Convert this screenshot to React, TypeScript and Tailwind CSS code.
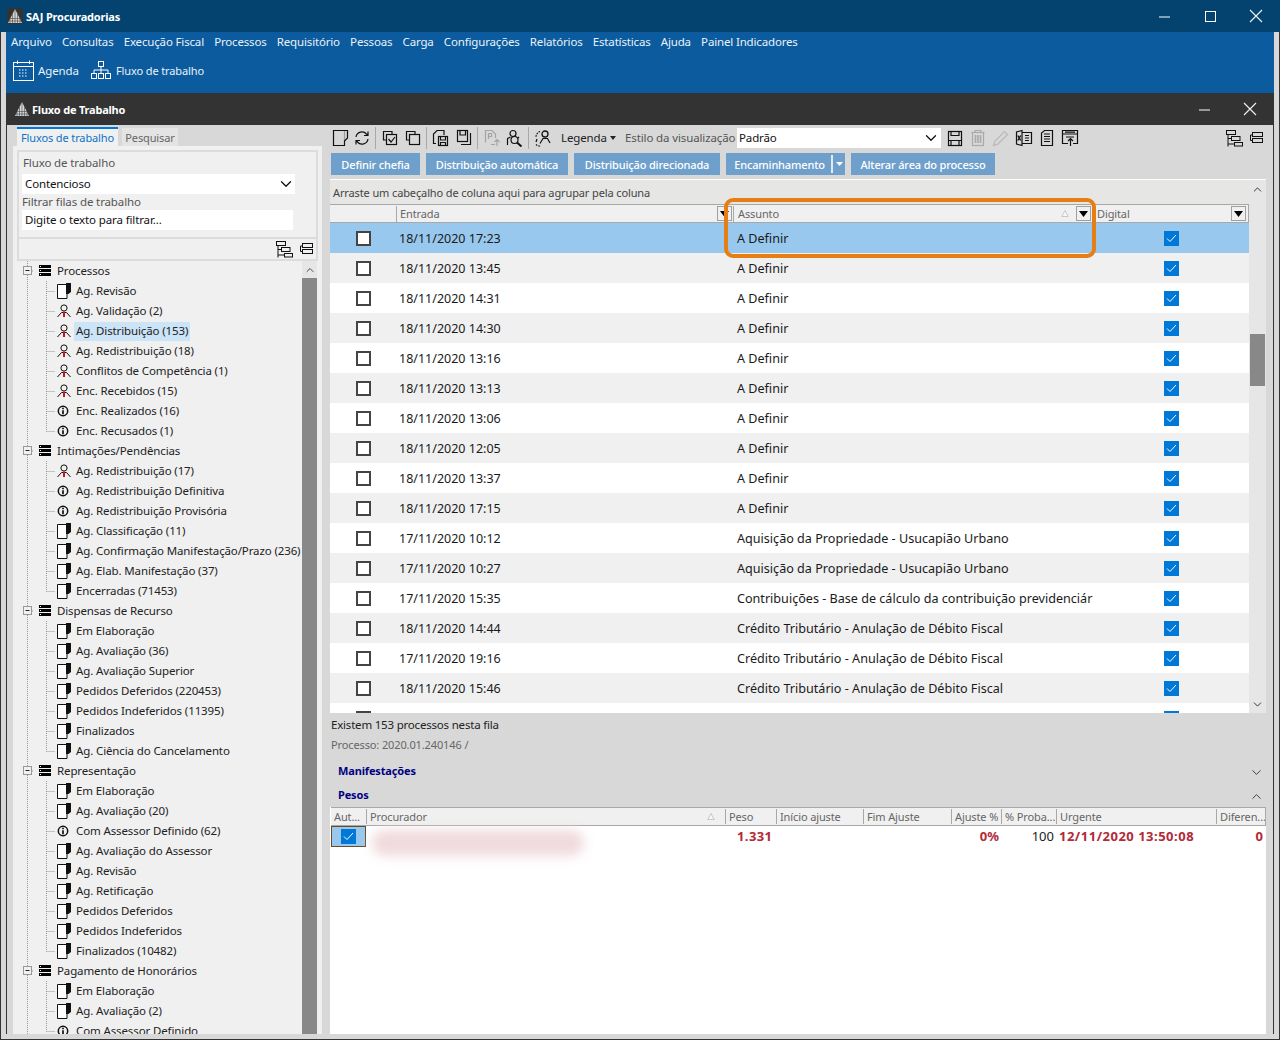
import React from "react";
import { ChevronDown, ChevronUp } from "lucide-react";

type S = { children: React.ReactNode; w?: number; h?: number; c?: string };
const Ic = ({ children, w = 18, h = 18, c = "#111" }: S) => (
  <svg width={w} height={h} viewBox={`0 0 ${w} ${h}`} fill="none" stroke={c} strokeWidth="1.2">{children}</svg>
);

const Logo = () => (
  <svg width="16" height="16" viewBox="0 0 16 16">
    <path d="M8 1 L15 15 H1 Z" fill="#d6d6d6" />
    <path d="M8 1V15M5.500 6V15M10.500 6V15M3 11V15M13 11V15M3 10.500H13M1.500 13H14.500" stroke="#444" strokeWidth=".6" fill="none" />
  </svg>
);

const WinX = () => (
  <svg width="14" height="14" viewBox="0 0 14 14" stroke="#f0f4f8" strokeWidth="1.1"><path d="M1 1L13 13M13 1L1 13" /></svg>
);
const WinMin = () => (
  <svg width="11" height="11" viewBox="0 0 11 11" stroke="#fff" strokeWidth="1"><path d="M0 6H11" /></svg>
);
const WinMax = () => (
  <svg width="11" height="11" viewBox="0 0 11 11" fill="none" stroke="#fff" strokeWidth="1"><rect x=".5" y=".5" width="10" height="10" /></svg>
);

const Calendar = () => (
  <svg width="21" height="21" viewBox="0 0 21 21" fill="none" stroke="#fff" strokeWidth="1">
    <rect x=".5" y="2.500" width="20" height="18" />
    <path d="M1 6.500H20M4.500 .5V4M16.500 .5V4" />
    <path d="M6 10H15M6 13H15M6 16H15" strokeDasharray="1.500 1.500" />
  </svg>
);
const Flow = () => (
  <svg width="21" height="19" viewBox="0 0 21 19" fill="none" stroke="#fff" strokeWidth="1">
    <rect x="7.500" y=".5" width="5" height="5" />
    <rect x=".5" y="12.500" width="5" height="5" />
    <rect x="7.500" y="12.500" width="5" height="5" />
    <rect x="14.500" y="12.500" width="5" height="5" />
    <path d="M10 6V12M3 12V9H17V12" />
  </svg>
);

const DocFold = () => (
  <Ic><path d="M2.500 1.500H16.500V9L13.500 12V16.500H2.500Z" /><path d="M13.500 12V1.500" opacity=".3" /></Ic>
);
const Refresh = () => (
  <Ic>
    <path d="M3 8a6 6 0 0 1 10.500-3L15 6.500M15 2.500V6.500H11" />
    <path d="M15 10a6 6 0 0 1-10.500 3L3 11.500M3 15.500V11.500H7" />
  </Ic>
);
const CopyCheck = () => (
  <Ic><path d="M11 5V2.500H2.500V11H5" /><rect x="5.500" y="5.500" width="10" height="10" /><path d="M7.500 10L10 13L14 8" /></Ic>
);
const Copy = () => (
  <Ic><path d="M11 5V2.500H2.500V11H5" /><rect x="5.500" y="5.500" width="10" height="10" /></Ic>
);
const DocSave = () => (
  <Ic><path d="M4 14.500H1.500V5L5 1.500H12V6" /><rect x="6.500" y="7.500" width="9" height="9" /><path d="M8.500 7.500V11H13.500V7.500M8.500 16V13.500H13.500V16" /></Ic>
);
const SaveB = () => (
  <Ic><rect x="2.500" y="1.500" width="10" height="11" /><path d="M5 1.500V6H10.500V1.500M15.500 4V15.500H6" /></Ic>
);
const PDoc = () => (
  <Ic c="#a4a4a4"><path d="M2.500 13.500V1.500H9L12.500 5V9" /><path d="M5.500 10V4.500H8.500V7.500H5.500" /><path d="M14 17V11M11.500 13L14 10.500L16.500 13M8 15.500H12" /></Ic>
);
const PersonSearch = () => (
  <Ic><circle cx="7" cy="4.500" r="3" /><path d="M1.500 16V9.500L4.500 8M12 8L13 9" /><circle cx="8.500" cy="11" r="3.500" /><path d="M11 13.500L15.500 17.500" strokeWidth="2" /></Ic>
);
const People = () => (
  <Ic><circle cx="11" cy="5" r="3" strokeWidth="1.300" /><path d="M6 14.500L9 9.500H13.500L16 14" /><path d="M6 2.500a6 6 0 0 0-4 6M2 15.500a6 6 0 0 0 5 1.500" strokeDasharray="1.600 1" /><path d="M3 10L2 13" /></Ic>
);
const Floppy = () => (
  <Ic><rect x="2.500" y="2.500" width="13" height="14" /><path d="M5 2.500V6.500H13V2.500M2.500 11.500H15.500M5 11.500V16.500H13V11.500" /></Ic>
);
const Trash = () => (
  <Ic c="#aaa"><path d="M2.500 3.500H15.500M6 3.500V1.500H12V3.500" /><rect x="3.500" y="3.500" width="11" height="13" /><path d="M6.500 6V14M9 6V14M11.500 6V14" strokeWidth="1.600" /></Ic>
);
const Pencil = () => (
  <Ic c="#b8b8b8"><path d="M1.500 16.500L3 12L12.500 2.500L15.500 5.500L6 15Z" /></Ic>
);
const Excel = () => (
  <Ic><path d="M7 1.500L1.500 3V15L7 16.500ZM7 3.500H16.500V14.500H7M10 6.500H14M10 9H14M10 11.500H14" /><path d="M2.800 6.500L5.700 11.500M5.700 6.500L2.800 11.500" strokeWidth="1.400" /></Ic>
);
const DocLines = () => (
  <Ic><path d="M3.500 16.500V4L6.500 1.500H14.500V16.500ZM6 5H12M6 7.500H12M6 10H12M6 12.500H12" /></Ic>
);
const WinArrow = () => (
  <Ic><path d="M7 14.500H1.500V1.500H16.500V14.500H12M1.500 5H16.500M5 8H13M4 3.200H14" /><path d="M9.500 17V9.500M7 12L9.500 9.500L12 12" /></Ic>
);
const TreeExpand = () => (
  <svg width="17" height="17" viewBox="0 0 17 17" fill="none" stroke="#111" strokeWidth="1">
    <rect x=".5" y=".5" width="9" height="4" />
    <rect x="5.500" y="6.500" width="8.500" height="4" />
    <rect x="8.500" y="12.500" width="8" height="3.500" />
    <path d="M2 5V16.500M2 8.500H5.500M2 14H8.500" />
  </svg>
);
const TreeCollapse = () => (
  <svg width="13" height="12" viewBox="0 0 13 12" fill="none" stroke="#111" strokeWidth="1">
    <rect x="2.500" y=".5" width="10" height="4" />
    <rect x="2.500" y="6.500" width="10" height="4" />
    <path d="M2.500 3H.5V8.500H2.500" />
  </svg>
);

const DocI = () => (
  <svg width="14" height="16" viewBox="0 0 14 16">
    <path d="M.5 1.500H10V15.500H.5Z" fill="#fff" stroke="#111" />
    <path d="M9 0H14V9L11.500 11H9Z" fill="#111" />
  </svg>
);
const PersonI = () => (
  <svg width="14" height="14" viewBox="0 0 14 14" fill="none">
    <circle cx="7" cy="4" r="3.100" stroke="#111" />
    <path d="M.5 13L4.500 8.500H9.500L13.500 13" stroke="#111" />
    <path d="M7 7.500V13" stroke="#cc1122" strokeWidth="2" />
  </svg>
);
const InfoI = () => (
  <svg width="12" height="12" viewBox="0 0 12 12" fill="none">
    <circle cx="6" cy="6" r="4.700" stroke="#111" strokeWidth="1.500" />
    <path d="M6 2.800V4.200M6 5.200V9.200" stroke="#111" strokeWidth="1.700" />
  </svg>
);
const GroupI = () => (
  <svg width="12" height="12" viewBox="0 0 12 12" shapeRendering="crispEdges">
    <rect width="12" height="3" y="0" fill="#000" />
    <rect width="12" height="3" y="4" fill="#000" />
    <rect width="12" height="3" y="8" fill="#000" />
    <rect x="1" y="1" width="1" height="1" fill="#fff" />
    <rect x="1" y="5" width="1" height="1" fill="#fff" />
    <rect x="1" y="9" width="1" height="1" fill="#fff" />
  </svg>
);

type Kind = "d" | "p" | "i";
const tree: { name: string; items: [string, Kind][] }[] = [
  { name: "Processos", items: [["Ag. Revisão", "d"], ["Ag. Validação (2)", "p"], ["Ag. Distribuição (153)", "p"], ["Ag. Redistribuição (18)", "p"], ["Conflitos de Competência (1)", "p"], ["Enc. Recebidos (15)", "p"], ["Enc. Realizados (16)", "i"], ["Enc. Recusados (1)", "i"]] },
  { name: "Intimações/Pendências", items: [["Ag. Redistribuição (17)", "p"], ["Ag. Redistribuição Definitiva", "i"], ["Ag. Redistribuição Provisória", "i"], ["Ag. Classificação (11)", "d"], ["Ag. Confirmação Manifestação/Prazo (236)", "d"], ["Ag. Elab. Manifestação (37)", "d"], ["Encerradas (71453)", "d"]] },
  { name: "Dispensas de Recurso", items: [["Em Elaboração", "d"], ["Ag. Avaliação (36)", "d"], ["Ag. Avaliação Superior", "d"], ["Pedidos Deferidos (220453)", "d"], ["Pedidos Indeferidos (11395)", "d"], ["Finalizados", "d"], ["Ag. Ciência do Cancelamento", "d"]] },
  { name: "Representação", items: [["Em Elaboração", "d"], ["Ag. Avaliação (20)", "d"], ["Com Assessor Definido (62)", "i"], ["Ag. Avaliação do Assessor", "d"], ["Ag. Revisão", "d"], ["Ag. Retificação", "d"], ["Pedidos Deferidos", "d"], ["Pedidos Indeferidos", "d"], ["Finalizados (10482)", "d"]] },
  { name: "Pagamento de Honorários", items: [["Em Elaboração", "d"], ["Ag. Avaliação (2)", "d"], ["Com Assessor Definido", "i"]] },
];

const dot = { stroke: "#999", strokeDasharray: "1 1", strokeWidth: 1 };

const GroupGutter = () => (
  <svg width="16" height="20" viewBox="0 0 16 20" fill="none" className="shrink-0">
    <path d="M9.500 0V20M14 10H16" {...dot} />
    <rect x="5.500" y="5.500" width="8" height="8" fill="#f0f0f0" stroke="#999" />
    <path d="M7.500 9.500H11.500" stroke="#222" />
  </svg>
);
const ItemGutter = ({ last }: { last: boolean }) => (
  <svg width="38" height="20" viewBox="0 0 38 20" fill="none" className="shrink-0">
    <path d="M9.500 0V20" {...dot} />
    <path d={last ? "M28.500 0V10.500M28.500 10.500H37" : "M28.500 0V20M28.500 10.500H37"} {...dot} />
  </svg>
);

const TreeRow = ({ label, kind, last, selected }: { label: string; kind: Kind; last: boolean; selected: boolean }) => (
  <div className="flex h-5 items-center">
    <ItemGutter last={last} />
    <span className="flex w-[20px] shrink-0 items-center pl-[1px]">
      {kind === "d" ? <DocI /> : kind === "p" ? <PersonI /> : <InfoI />}
    </span>
    <span className={`-ml-[2px] flex h-[19px] items-center whitespace-nowrap px-[2px] text-[#222] ${selected ? "bg-[#cce4f7]" : ""}`}>{label}</span>
  </div>
);

const Sidebar = () => (
  <aside className="flex w-[323px] shrink-0 flex-col pl-[6px] pr-[8px]">
    <div className="flex h-[21px] items-end gap-1 pl-1 text-[11px]">
      <div className="flex h-[19px] w-[101px] items-center justify-center whitespace-nowrap border-t-2 border-[#0078d7] bg-[#f0f0f0] text-[#0b72c8]">Fluxos de trabalho</div>
      <div className="flex h-[18px] w-[56px] items-center justify-center bg-[#e4e4e4] text-[#666]">Pesquisar</div>
    </div>
    <div className="flex min-h-0 flex-1 flex-col bg-[#f0f0f0] pb-0 pl-1 pr-[5px] pt-1">
      <div className="-mr-[1px] flex h-[87px] shrink-0 flex-col border-2 border-b-0 border-[#dcdcdc] pl-[3px]">
        <div className="flex h-[22px] items-center pl-[1px] text-[#555]">Fluxo de trabalho</div>
        <div className="flex h-5 w-[273px] items-center justify-between bg-white pl-[3px] text-[#111]">
          Contencioso
          <ChevronDown size={18} strokeWidth={1.700} color="#111" />
        </div>
        <div className="flex h-4 items-center text-[#555]">Filtrar filas de trabalho</div>
        <div className="flex h-5 w-[271px] items-center bg-white pl-[3px] text-[#111]">Digite o texto para filtrar...</div>
      </div>
      <div className="-mr-[1px] flex h-[24px] shrink-0 items-center justify-end gap-[7px] border-2 border-[#dcdcdc] pr-[3px]">
        <TreeExpand />
        <TreeCollapse />
      </div>
      <div className="flex min-h-0 flex-1">
        <div className="min-w-0 flex-1 overflow-hidden pl-[1px] pt-0">
          {tree.map((g) => (
            <div key={g.name}>
              <div className="flex h-5 items-center">
                <GroupGutter />
                <span className="flex w-[19px] shrink-0 justify-center pl-[3px]"><GroupI /></span>
                <span className="whitespace-nowrap pl-[4px] text-[#222]">{g.name}</span>
              </div>
              {g.items.map(([l, k], i) => (
                <TreeRow key={l + i} label={l} kind={k} last={i === g.items.length - 1} selected={l === "Ag. Distribuição (153)"} />
              ))}
            </div>
          ))}
        </div>
        <div className="flex w-[15px] shrink-0 flex-col bg-[#888]">
          <div className="flex h-[17px] items-center justify-center bg-[#e6e6e6]"><ChevronUp size={12} strokeWidth={1.800} color="#333" /></div>
        </div>
      </div>
    </div>
  </aside>
);

const Sep = () => <span className="mx-[2px] h-[22px] w-px shrink-0 bg-[#a8a8a8]" />;
const Tool = ({ children }: { children: React.ReactNode }) => (
  <span className="flex w-[23px] shrink-0 items-center justify-center">{children}</span>
);

const Btn = ({ w, children }: { w: string; children: React.ReactNode }) => (
  <div className={`flex h-[22px] items-center justify-center whitespace-nowrap bg-[#6fa0cc] text-[11px] font-medium tracking-[-0.15px] text-white ${w}`}>{children}</div>
);

const rows: [string, string][] = [
  ["18/11/2020 17:23", "A Definir"],
  ["18/11/2020 13:45", "A Definir"],
  ["18/11/2020 14:31", "A Definir"],
  ["18/11/2020 14:30", "A Definir"],
  ["18/11/2020 13:16", "A Definir"],
  ["18/11/2020 13:13", "A Definir"],
  ["18/11/2020 13:06", "A Definir"],
  ["18/11/2020 12:05", "A Definir"],
  ["18/11/2020 13:37", "A Definir"],
  ["18/11/2020 17:15", "A Definir"],
  ["17/11/2020 10:12", "Aquisição da Propriedade - Usucapião Urbano"],
  ["17/11/2020 10:27", "Aquisição da Propriedade - Usucapião Urbano"],
  ["17/11/2020 15:35", "Contribuições - Base de cálculo da contribuição previdenciári"],
  ["18/11/2020 14:44", "Crédito Tributário - Anulação de Débito Fiscal"],
  ["17/11/2020 19:16", "Crédito Tributário - Anulação de Débito Fiscal"],
  ["18/11/2020 15:46", "Crédito Tributário - Anulação de Débito Fiscal"],
  ["", ""],
];

const BlueCheck = () => (
  <span className="flex h-[15px] w-[15px] items-center justify-center bg-[#0078d7]">
    <svg width="11" height="9" viewBox="0 0 11 9" fill="none" stroke="#fff" strokeWidth="1"><path d="M1 4.500L4 7.500L10 1" /></svg>
  </span>
);
const Filter = () => (
  <span className="flex h-[15px] w-[15px] shrink-0 items-center justify-center border border-[#a0a0a0] bg-[#f0f0f0]">
    <svg width="9" height="6" viewBox="0 0 9 6"><path d="M0 0H9L4.500 6Z" fill="#000" /></svg>
  </span>
);
const SortTri = () => (
  <svg width="8" height="7" viewBox="0 0 8 7" fill="none" stroke="#c8c8c8"><path d="M4 .5L.8 6.500H7.200Z" fill="#f8f8f8" /></svg>
);

const Grid = () => (
  <section className="relative flex h-[534px] shrink-0 border-t border-white">
    <div className="flex min-w-0 flex-1 flex-col">
      <div className="flex h-6 shrink-0 items-center bg-[#e6e6e4] pl-[3px] pt-[1px] text-[11px] tracking-[-0.12px] text-[#444]">
        Arraste um cabeçalho de coluna aqui para agrupar pela coluna
      </div>
      <div className="flex h-[19px] shrink-0 items-center border-y border-r border-[#a8a8a8] bg-[#f0f0f0] text-[11px] text-[#666]">
        <div className="w-[66px] shrink-0" />
        <div className="flex h-[16px] w-[337px] shrink-0 items-center justify-between border-l border-[#a8a8a8] pl-[3px] pr-[1px]"><span>Entrada</span><Filter /></div>
        <div className="flex h-[16px] w-[360px] shrink-0 items-center justify-between border-l border-[#a8a8a8] pl-1 pr-[2px]">
          <span>Assunto</span>
          <span className="flex items-center gap-[7px]"><SortTri /><Filter /></span>
        </div>
        <div className="flex h-[16px] min-w-0 flex-1 items-center justify-between pl-1 pr-[2px]"><span>Digital</span><Filter /></div>
      </div>
      <div className="min-h-0 flex-1 overflow-hidden">
        {rows.map(([d, a], i) => (
          <div key={i} className={`flex h-[30px] items-center text-[#1a1a1a] ${i === 0 ? "bg-[#99c8ef]" : i % 2 ? "bg-[#f0f0f0]" : "bg-white"}`}>
            <div className="flex w-[66px] shrink-0 justify-center pl-[1px]">
              <span className="h-[15px] w-[15px] border-2 border-[#444] bg-white" />
            </div>
            <div className="w-[337px] shrink-0 pl-[3px] pt-[3px] text-[12.500px] tracking-normal">{d}</div>
            <div className="w-[360px] shrink-0 overflow-hidden whitespace-nowrap pl-[4px] pt-[3px] text-[12.600px] tracking-normal">{a}</div>
            <div className="flex min-w-0 flex-1 justify-center"><BlueCheck /></div>
          </div>
        ))}
      </div>
    </div>
    <div className="flex w-[17px] shrink-0 flex-col bg-[#e6e6e6]">
      <div className="flex h-[17px] shrink-0 items-center justify-center pt-[2px]"><ChevronUp size={13} strokeWidth={1.800} color="#333" /></div>
      <div className="ml-[1px] mt-[137px] h-[52px] w-[15px] bg-[#888]" />
      <div className="flex-1" />
      <div className="flex h-[17px] shrink-0 items-center justify-center"><ChevronDown size={13} strokeWidth={1.800} color="#333" /></div>
    </div>
    <div className="pointer-events-none absolute left-[394px] top-[18px] h-[60px] w-[372px] rounded-[9px] border-[4px] border-[#e67e14]" />
  </section>
);

const HCell = ({ w, first, children }: { w: string; first?: boolean; children: React.ReactNode }) => (
  <div className={`flex h-[15px] shrink-0 items-center overflow-hidden whitespace-nowrap pl-[3px] ${w} ${first ? "" : "border-l border-[#a8a8a8]"}`}>{children}</div>
);

const Pesos = () => (
  <section className="min-h-0 flex-1 border-l border-white bg-white">
    <div className="flex h-[19px] w-[935px] items-center border-y border-r border-[#a8a8a8] bg-[#f0f0f0] text-[11px] text-[#666]">
      <HCell w="w-[35px]" first>Aut...</HCell>
      <HCell w="w-[359px]">
        <span className="flex flex-1 items-center justify-between pr-[10px]">Procurador<SortTri /></span>
      </HCell>
      <HCell w="w-[51px]">Peso</HCell>
      <HCell w="w-[87px]">Início ajuste</HCell>
      <HCell w="w-[88px]">Fim Ajuste</HCell>
      <HCell w="w-[50px]">Ajuste %</HCell>
      <HCell w="w-[55px]">% Proba...</HCell>
      <HCell w="w-[160px]">Urgente</HCell>
      <HCell w="w-[49px]">Diferen...</HCell>
    </div>
    <div className="flex items-start text-[13px] tracking-normal">
      <div className="flex h-[21px] w-[35px] shrink-0 items-center justify-center border border-[#6b4a24] bg-[#99c8ef]"><BlueCheck /></div>
      <div className="w-[359px] shrink-0 pl-[6px] pt-[4px]">
        <div className="h-[26px] w-[212px] rounded-full bg-[#f0dadd] blur-[6px]" />
      </div>
      <div className="w-[51px] shrink-0 pl-[12px] pt-[4px] font-bold tracking-[0.4px] text-[#b22a38]">1.331</div>
      <div className="w-[175px] shrink-0" />
      <div className="w-[50px] shrink-0 pr-[2px] pt-[4px] text-right font-bold text-[#b22a38]">0%</div>
      <div className="w-[55px] shrink-0 pr-[2px] pt-[4px] text-right text-[#222]">100</div>
      <div className="w-[160px] shrink-0 whitespace-nowrap pl-[3px] pt-[4px] font-bold tracking-[0.5px] text-[#b22a38]">12/11/2020 13:50:08</div>
      <div className="w-[47px] shrink-0 pt-[4px] text-right font-bold text-[#b22a38]">0</div>
    </div>
  </section>
);

const Main = () => (
  <main className="flex w-[936px] shrink-0 flex-col">
    <div className="flex h-[25px] shrink-0 items-center pt-[1px]">
      <span className="flex w-[19px] shrink-0 justify-center"><DocFold /></span>
      <span className="w-[1px] shrink-0" />
      <Tool><Refresh /></Tool>
      <Sep />
      <Tool><CopyCheck /></Tool>
      <Tool><Copy /></Tool>
      <Sep />
      <Tool><DocSave /></Tool>
      <Tool><SaveB /></Tool>
      <Sep />
      <Tool><PDoc /></Tool>
      <Tool><PersonSearch /></Tool>
      <Sep />
      <Tool><People /></Tool>
      <span className="flex w-[71px] shrink-0 items-center gap-[3px] pl-[7px] text-[#222]">Legenda<svg width="6" height="4" viewBox="0 0 6 4"><path d="M0 0H6L3 4Z" fill="#222" /></svg></span>
      <span className="w-[111px] shrink-0 whitespace-nowrap text-[#555]">Estilo da visualização</span>
      <div className="ml-[1px] flex h-[20px] w-[204px] shrink-0 items-center justify-between bg-white pl-[2px] pr-[1px] text-[#111]">
        Padrão
        <ChevronDown size={18} strokeWidth={1.700} color="#111" />
      </div>
      <span className="ml-[2px] flex items-center">
        <Tool><Floppy /></Tool>
        <Tool><Trash /></Tool>
        <Tool><Pencil /></Tool>
        <Tool><Excel /></Tool>
        <Tool><DocLines /></Tool>
        <Tool><WinArrow /></Tool>
      </span>
      <span className="ml-auto flex items-center gap-[7px] pr-[3px]"><TreeExpand /><TreeCollapse /></span>
    </div>
    <div className="mt-[3px] flex h-[22px] shrink-0 gap-[6px] pl-[1px]">
      <Btn w="w-[89px]">Definir chefia</Btn>
      <Btn w="w-[142px]">Distribuição automática</Btn>
      <Btn w="w-[146px]">Distribuição direcionada</Btn>
      <div className="flex h-[22px] w-[119px] items-center whitespace-nowrap bg-[#6fa0cc] text-[11px] font-medium tracking-[-0.15px] text-white">
        <span className="w-[105px] pl-[2px] text-center">Encaminhamento</span>
        <span className="h-[18px] w-[2px] bg-[#dfeaf4]" />
        <svg className="ml-[3px]" width="7" height="4" viewBox="0 0 7 4"><path d="M0 0H7L3.500 4Z" fill="#fff" /></svg>
      </div>
      <Btn w="w-[144px]">Alterar área do processo</Btn>
    </div>
    <div className="h-[4px] shrink-0" />
    <Grid />
    <div className="flex h-[17px] shrink-0 items-end pl-[1px] tracking-[-0.2px] text-[#222]">Existem 153 processos nesta fila</div>
    <div className="flex h-5 shrink-0 items-end pl-[1px] text-[11px] text-[#666]">Processo: 2020.01.240146 /</div>
    <div className="flex h-[30px] shrink-0 items-end justify-between pl-2 pr-[2px] text-[11px] font-bold tracking-[-0.15px] text-[#000080]">
      <span className="leading-[18px]">Manifestações</span><ChevronDown size={15} strokeWidth={1.200} color="#111" />
    </div>
    <div className="flex h-6 shrink-0 items-end justify-between pl-2 pr-[2px] text-[11px] font-bold tracking-[-0.15px] text-[#000080]">
      <span className="leading-[18px]">Pesos</span><ChevronUp size={15} strokeWidth={1.200} color="#111" />
    </div>
    <div className="h-[3px] shrink-0" />
    <Pesos />
  </main>
);

const menu = ["Arquivo", "Consultas", "Execução Fiscal", "Processos", "Requisitório", "Pessoas", "Carga", "Configurações", "Relatórios", "Estatísticas", "Ajuda", "Painel Indicadores"];

export default function App() {
  return (
    <div className="flex h-[1040px] w-[1280px] flex-col overflow-hidden bg-[#d8d8d8] font-['Noto_Sans',sans-serif] text-[11.500px] leading-none tracking-[-0.12px]">
      <header className="flex h-8 shrink-0 items-center bg-[#04426f] pl-[7px] text-white">
        <span className="flex h-4 w-4 items-center justify-center bg-[#333]"><Logo /></span>
        <span className="pl-[3px] text-[11px] font-bold tracking-[-0.2px]">SAJ Procuradorias</span>
        <span className="ml-auto flex items-center pr-[1px]">
          <span className="flex w-[46px] justify-center"><WinMin /></span>
          <span className="flex w-[46px] justify-center"><WinMax /></span>
          <span className="flex w-[46px] justify-center"><WinX /></span>
        </span>
      </header>
      <div className="flex min-h-0 flex-1 flex-col border-x border-b border-[#333] px-[5px] pb-[5px]">
        <div className="h-[61px] shrink-0 bg-[#0b5b9e] text-white">
          <nav className="flex h-[20px] items-center gap-[10.200px] pl-[5px] tracking-[-0.16px] text-[#eaf2f9]">
            {menu.map((m) => <span key={m} className="whitespace-nowrap">{m}</span>)}
          </nav>
          <div className="flex h-[37px] items-center pl-[7px] text-[#eaf2f9]">
            <Calendar />
            <span className="w-[43px] shrink-0 pl-[4px]">Agenda</span>
            <span className="pl-[14px]"><Flow /></span>
            <span className="pl-[4px] text-[11px]">Fluxo de trabalho</span>
          </div>
        </div>
        <div className="flex h-8 shrink-0 items-center bg-[#333] pl-[8px] text-white">
          <Logo />
          <span className="pl-[2px] text-[11px] font-bold tracking-[-0.2px]">Fluxo de Trabalho</span>
          <span className="ml-auto flex items-center">
            <span className="flex w-[46px] justify-center"><WinMin /></span>
            <span className="flex w-[46px] justify-center"><WinX /></span>
            <span className="w-[1px]" />
          </span>
        </div>
        <div className="flex min-h-0 flex-1 border-x border-[#333] bg-[#d8d8d8]">
          <Sidebar />
          <Main />
        </div>
      </div>
    </div>
  );
}
